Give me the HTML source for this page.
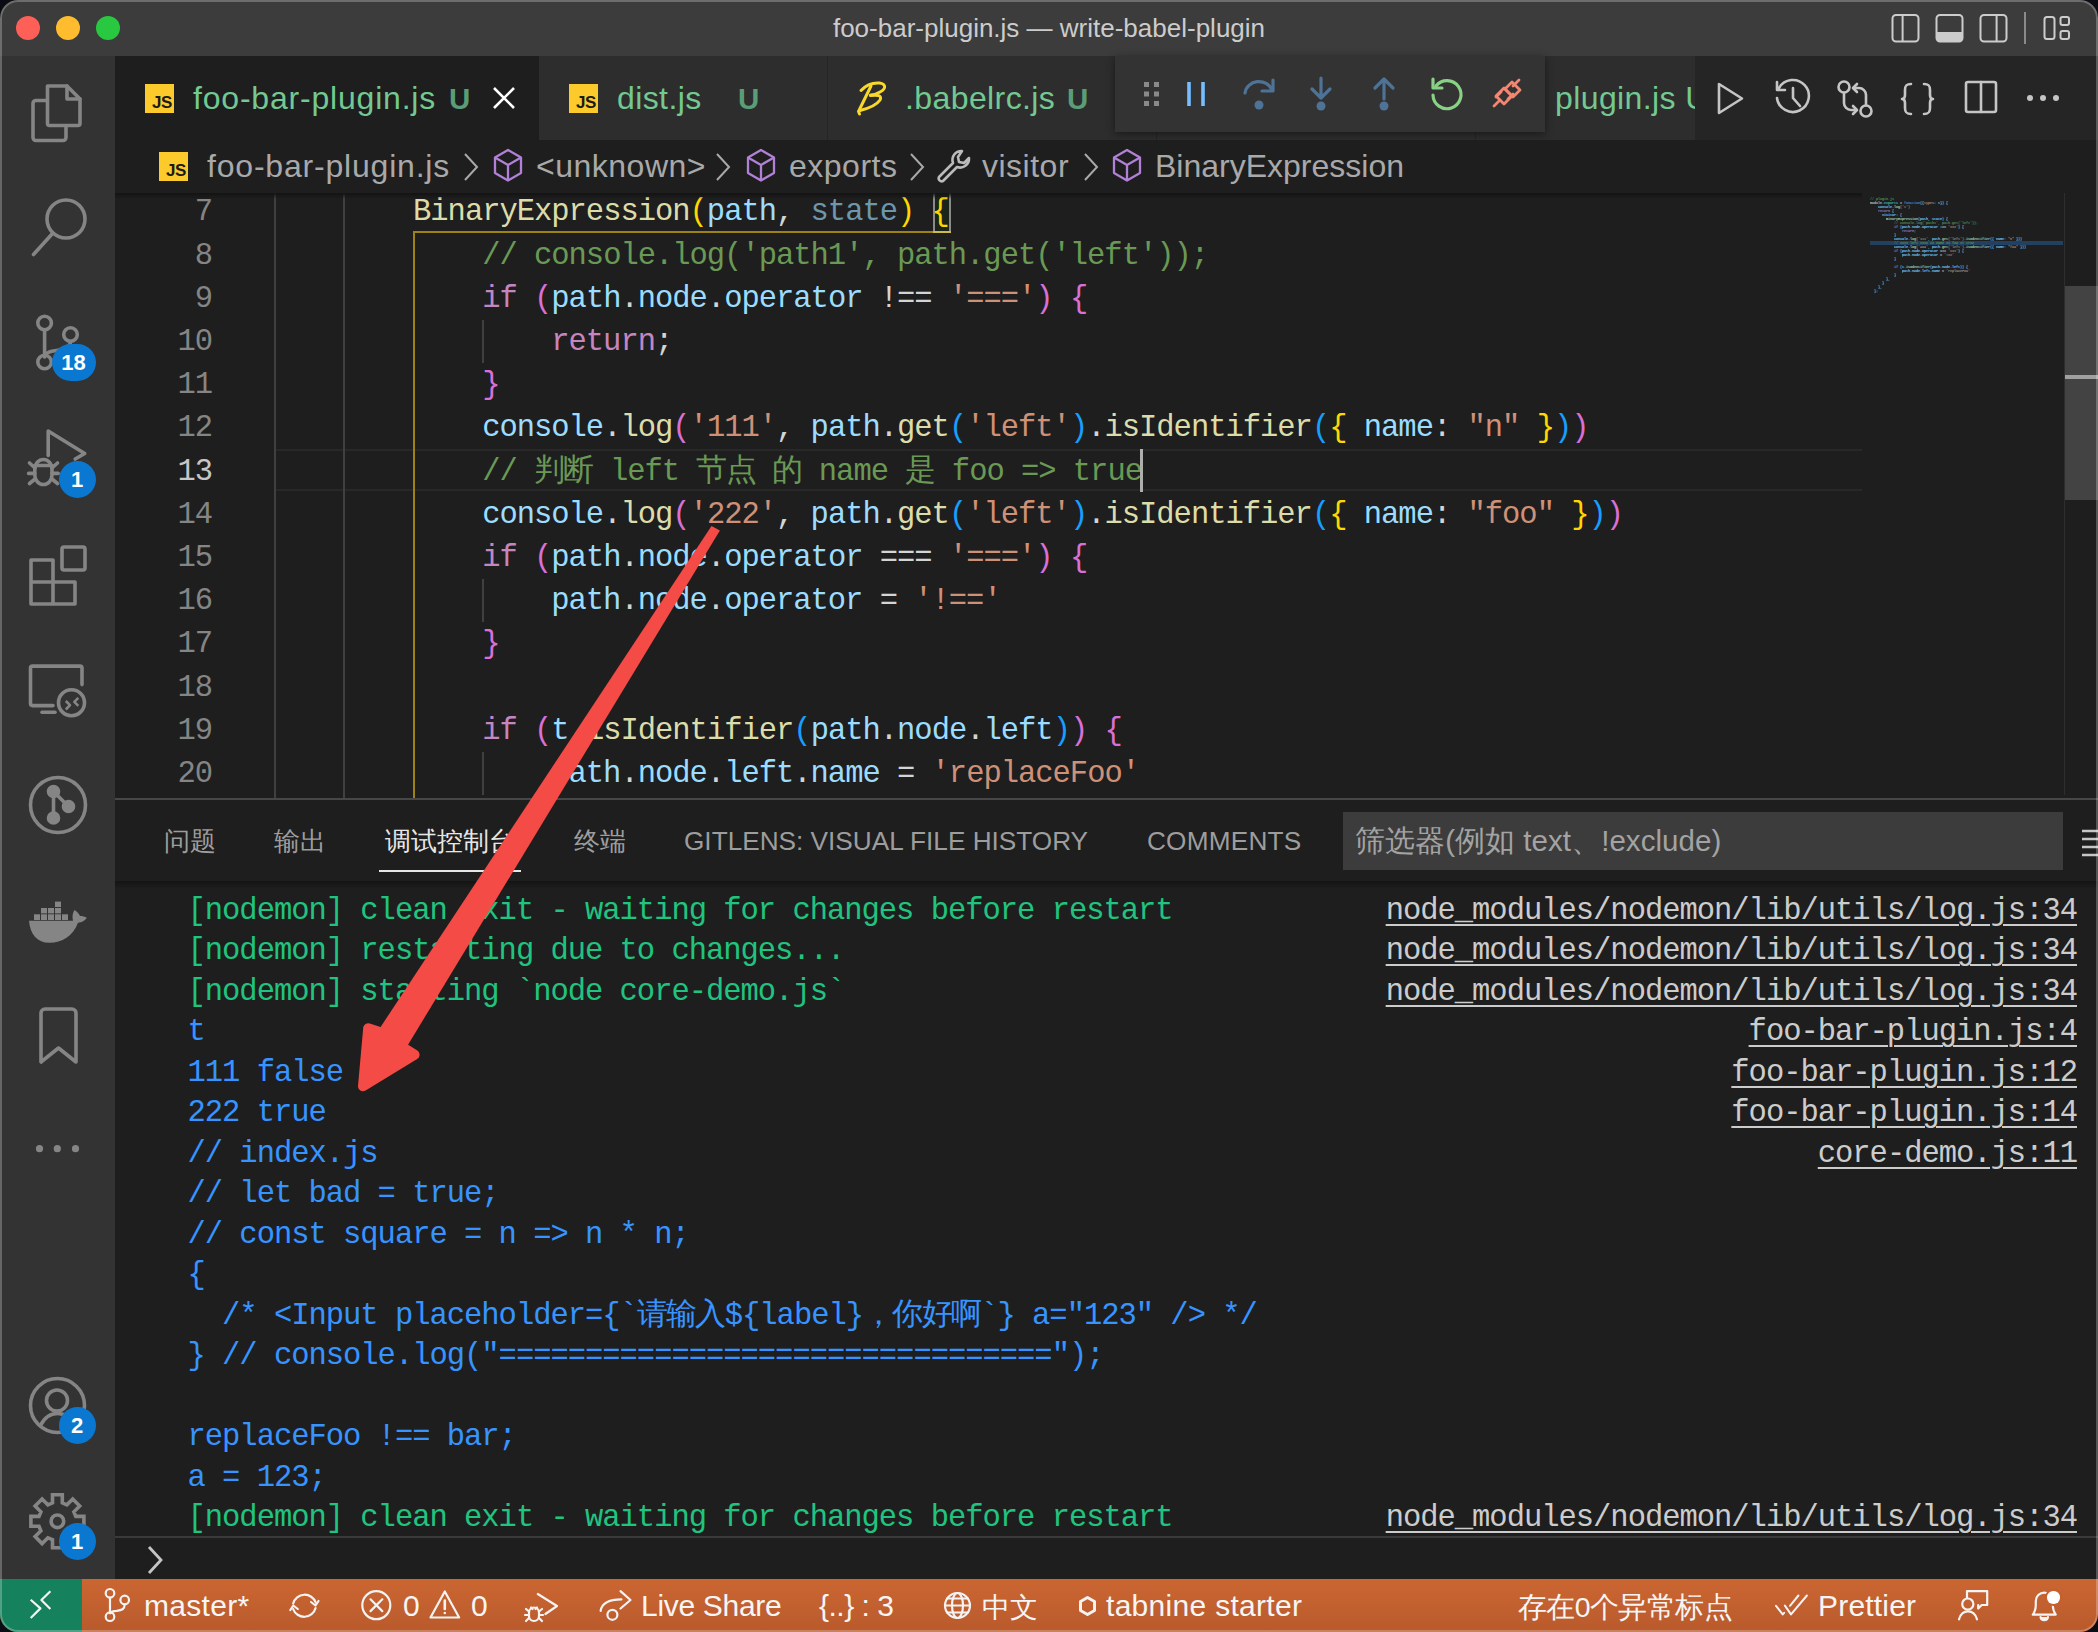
<!DOCTYPE html>
<html><head><meta charset="utf-8">
<style>
*{margin:0;padding:0;box-sizing:border-box}
html,body{width:2098px;height:1632px;overflow:hidden;background:#0b0c14}
body{position:relative;font-family:"Liberation Sans",sans-serif}
.a{position:absolute}
#win{position:absolute;left:0;top:0;width:2098px;height:1632px;border-radius:18px;overflow:hidden;background:#1e1e1e}
.m{position:absolute;font-family:"Liberation Mono",monospace;font-size:30.5px;letter-spacing:-1.020px;white-space:pre}
.ln{left:115px;width:97px;text-align:right;color:#858585;height:43.2px;line-height:43.2px}
.cl{height:43.2px;line-height:43.2px;color:#d4d4d4}
.co{height:40.5px;line-height:40.5px;color:#3794ff}
.lk{height:40.5px;line-height:40.5px;color:#cccccc;text-decoration:underline;text-underline-offset:5px;text-decoration-thickness:2px}
.f{color:#dcdcaa}.v{color:#9cdcfe}.k{color:#c586c0}.s{color:#ce9178}.c{color:#6a9955}
.b1{color:#ffd700}.b2{color:#da70d6}.b3{color:#179fff}.dim{color:#6c97ad}
.g{color:#20c47f}
.ui{font-family:"Liberation Sans",sans-serif;white-space:pre;position:absolute}
svg{position:absolute;overflow:visible}
</style></head><body>
<div id="win">

<div class="a" style="left:0;top:0;width:2098px;height:56px;background:#3c3c3c"></div>
<div class="a" style="left:16px;top:16px;width:24px;height:24px;border-radius:50%;background:#fe5f57"></div>
<div class="a" style="left:56px;top:16px;width:24px;height:24px;border-radius:50%;background:#febc2e"></div>
<div class="a" style="left:96px;top:16px;width:24px;height:24px;border-radius:50%;background:#28c840"></div>
<div class="ui" style="left:0;width:2098px;text-align:center;top:12px;font-size:26px;line-height:32px;color:#cccccc">foo-bar-plugin.js — write-babel-plugin</div>
<svg width="2098" height="56" style="left:0;top:0" fill="none" stroke="#cccccc" stroke-width="2">
<rect x="1892.5" y="15" width="26" height="26.5" rx="3.5"/><line x1="1902.6" y1="15" x2="1902.6" y2="41.5"/>
<rect x="1936.5" y="15" width="26" height="26.5" rx="3.5"/><path d="M1937 32h25v6.5a3 3 0 0 1-3 3h-19a3 3 0 0 1-3-3z" fill="#cccccc" stroke="none"/>
<rect x="1980.5" y="15" width="26" height="26.5" rx="3.5"/><line x1="1996.6" y1="15" x2="1996.6" y2="41.5"/>
<line x1="2025" y1="12" x2="2025" y2="44" stroke="#8a8a8a"/>
<rect x="2044.5" y="17" width="10" height="22" rx="2.5"/>
<rect x="2060.5" y="17" width="8.5" height="8" rx="2"/><rect x="2060.5" y="31" width="8.5" height="8" rx="2"/>
</svg>
<div class="a" style="left:0;top:56px;width:115px;height:1524px;background:#333333"></div>
<svg width="115" height="1580" style="left:0;top:0" fill="none" stroke="#858585" stroke-width="3.6" stroke-linejoin="round" stroke-linecap="round">
<!-- explorer -->
<rect x="33" y="100.5" width="33" height="40" rx="3"/>
<path d="M47.5 86h19.5l13 13v24.5a2 2 0 0 1-2 2h-28.5a2 2 0 0 1-2-2z" fill="#333333"/>
<path d="M67 86v13h13"/>
<!-- search -->
<circle cx="66" cy="219" r="19"/><line x1="52.5" y1="233.5" x2="33.5" y2="254.5"/>
<!-- scm -->
<circle cx="44.6" cy="323" r="6.8"/><circle cx="44.6" cy="362" r="6.8"/><circle cx="70.5" cy="334.5" r="6.8"/>
<line x1="44.6" y1="330" x2="44.6" y2="355"/><path d="M70.5 341.5C70.5 348 62 350 53 351C47.5 352 45 354 44.6 357"/>
<!-- run debug -->
<path d="M48.2 455.5V431l36.5 22.5l-9.5 5.5"/>
<path d="M34.8 469a8.6 9.5 0 0 1 17.2 0v6a8.6 9.5 0 0 1-17.2 0z"/><path d="M35 465.5h17M29.5 463l5.5 5M28.6 473.4h6.2M29.5 483.5l5.5-4.5M57.5 463l-5.5 5M52 473.4h6.2M57.5 483.5l-5.5-4.5"/>
<!-- extensions -->
<path d="M31 560h22v22h-22zM31 582v22h22v-22zM53 582h22v22h-22z"/>
<rect x="62" y="547" width="23" height="23" rx="2"/>
<!-- remote explorer -->
<path d="M53 705.6h-20.5a2 2 0 0 1-2-2v-35.5a2 2 0 0 1 2-2h47.5a2 2 0 0 1 2 2v16.5"/><path d="M42 712.3h13"/>
<circle cx="71.5" cy="702.7" r="13"/><path d="M65.8 701l4.2 4.2l-4.2 4.3M78.3 697.8l-4 4l4 4" stroke-width="2.6" stroke-linecap="butt"/>
<!-- gitlens -->
<circle cx="58" cy="805" r="27.5"/>
<path d="M53.5 791.5v25M53.5 791.5l15 15"/>
<circle cx="53.5" cy="791.5" r="5" fill="#858585"/><circle cx="53.5" cy="818" r="5" fill="#858585"/><circle cx="68.5" cy="806.5" r="5" fill="#858585"/>
<!-- bookmark -->
<path d="M41 1013a4 4 0 0 1 4-4h27a4 4 0 0 1 4 4v49l-17.5-14l-17.5 14z"/>
</svg>
<svg width="115" height="1580" style="left:0;top:0" fill="#858585" stroke="none">
<path d="M29 920.7H73C72 917 72.5 912.5 74.5 910C77 911.5 79 913.5 80 916C82.5 916 85 916.5 86.8 917.8C85 920.5 82 922.5 78 922.8C73 936 62 942.8 49.5 942.8C37 942.8 30 934 29 920.7Z"/>
<rect x="34" y="914.3" width="6" height="5.7"/><rect x="41" y="914.3" width="6" height="5.7"/><rect x="48" y="914.3" width="6" height="5.7"/><rect x="55" y="914.3" width="6" height="5.7"/><rect x="62" y="914.3" width="6" height="5.7"/>
<rect x="41" y="908" width="6" height="5.4"/><rect x="48" y="908" width="6" height="5.4"/><rect x="55" y="908" width="6" height="5.4"/>
<rect x="55" y="901.6" width="6" height="5.4"/>
<circle cx="39.5" cy="1148.7" r="3.6"/><circle cx="57.3" cy="1148.7" r="3.6"/><circle cx="75.5" cy="1148.7" r="3.6"/>
</svg>
<svg width="115" height="1580" style="left:0;top:0" fill="none" stroke="#858585" stroke-width="3.6" stroke-linejoin="round" stroke-linecap="round">
<!-- accounts -->
<circle cx="57.5" cy="1405.5" r="27"/><circle cx="57" cy="1400.5" r="10.5"/><path d="M40.5 1425.5c4-8 9.5-12 17-12s13 4 17 12"/>
<!-- gear -->
<circle cx="57.4" cy="1521.3" r="6.3"/>
<path d="M52.5 1502.9 L52.5 1494.8 L62.3 1494.8 L62.3 1502.9 L66.9 1504.8 L72.7 1499.0 L79.7 1506.0 L73.9 1511.8 L75.8 1516.4 L83.9 1516.4 L83.9 1526.2 L75.8 1526.2 L73.9 1530.8 L79.7 1536.6 L72.7 1543.6 L66.9 1537.8 L62.3 1539.7 L62.3 1547.8 L52.5 1547.8 L52.5 1539.7 L47.9 1537.8 L42.1 1543.6 L35.1 1536.6 L40.9 1530.8 L39.0 1526.2 L30.9 1526.2 L30.9 1516.4 L39.0 1516.4 L40.9 1511.8 L35.1 1506.0 L42.1 1499.0 L47.9 1504.8Z" stroke-linejoin="miter"/>
</svg>
<div class="a" style="left:51.5px;top:344.0px;width:44px;height:37px;border-radius:18.5px;background:#0a78d0;color:#fff;font-family:Liberation Sans,sans-serif;font-weight:bold;font-size:22px;line-height:37px;text-align:center">18</div>
<div class="a" style="left:58.5px;top:460.5px;width:37px;height:37px;border-radius:18.5px;background:#0a78d0;color:#fff;font-family:Liberation Sans,sans-serif;font-weight:bold;font-size:22px;line-height:37px;text-align:center">1</div>
<div class="a" style="left:58.5px;top:1406.5px;width:37px;height:37px;border-radius:18.5px;background:#0a78d0;color:#fff;font-family:Liberation Sans,sans-serif;font-weight:bold;font-size:22px;line-height:37px;text-align:center">2</div>
<div class="a" style="left:58.5px;top:1522.5px;width:37px;height:37px;border-radius:18.5px;background:#0a78d0;color:#fff;font-family:Liberation Sans,sans-serif;font-weight:bold;font-size:22px;line-height:37px;text-align:center">1</div>
<div class="a" style="left:115px;top:56px;width:1983px;height:84px;background:#252526"></div>
<div class="a" style="left:115px;top:56px;width:424px;height:84px;background:#1e1e1e"></div>
<div class="a" style="left:539px;top:56px;width:288px;height:84px;background:#2d2d2d"></div>
<div class="a" style="left:828px;top:56px;width:328px;height:84px;background:#2d2d2d"></div>
<div class="a" style="left:1157px;top:56px;width:318px;height:84px;background:#2d2d2d"></div>
<div class="a" style="left:1476px;top:56px;width:219px;height:84px;background:#2d2d2d"></div>
<div class="a" style="left:145px;top:84px;width:29px;height:29px;background:#fdca2c"></div>
<div class="ui" style="left:152px;top:93px;font-size:17px;line-height:20px;color:#1a1a1a;font-weight:bold;letter-spacing:-0.5px">JS</div>
<div class="ui" style="left:193px;top:79.5px;font-size:32px;line-height:36.8px;color:#73c991;letter-spacing:0.8px;">foo-bar-plugin.js</div>
<div class="ui" style="left:449px;top:81.8px;font-size:29.5px;line-height:33.9px;color:#5a9d77;letter-spacing:0px;font-weight:bold">U</div>
<svg width="30" height="30" style="left:489px;top:83px" stroke="#ffffff" stroke-width="2.6"><path d="M5 5L25 25M25 5L5 25"/></svg>
<div class="a" style="left:569px;top:84px;width:29px;height:29px;background:#fdca2c"></div>
<div class="ui" style="left:576px;top:93px;font-size:17px;line-height:20px;color:#1a1a1a;font-weight:bold;letter-spacing:-0.5px">JS</div>
<div class="ui" style="left:617px;top:79.5px;font-size:32px;line-height:36.8px;color:#73c991;letter-spacing:0.4px;">dist.js</div>
<div class="ui" style="left:738px;top:81.8px;font-size:29.5px;line-height:33.9px;color:#5a9d77;letter-spacing:0px;font-weight:bold">U</div>
<svg width="2098" height="140" style="left:0;top:0" fill="none" stroke="#f7d82b" stroke-width="3" stroke-linecap="round" stroke-linejoin="round"><path d="M861 90.5C866 85 873 82.5 879.5 83C886 84 886.5 88.5 880 92C876 94.5 872.5 95 870.5 95"/><path d="M871 86L858.5 111.5L859.5 114"/><path d="M870.5 95.5C877 94.5 882.5 95.5 880 100C877 104.5 868 108.5 860 110.5"/></svg>
<div class="ui" style="left:905px;top:79.5px;font-size:32px;line-height:36.8px;color:#73c991;letter-spacing:0.4px;">.babelrc.js</div>
<div class="ui" style="left:1067px;top:81.8px;font-size:29.5px;line-height:33.9px;color:#5a9d77;letter-spacing:0px;font-weight:bold">U</div>
<div class="a" style="left:827px;top:56px;width:1px;height:84px;background:#252526"></div>
<div class="a" style="left:1156px;top:56px;width:1px;height:84px;background:#252526"></div>
<div class="a" style="left:1475px;top:56px;width:1px;height:84px;background:#252526"></div>
<div class="a" style="left:1545px;top:56px;width:150px;height:84px;overflow:hidden">
<div class="ui" style="left:10px;top:23.5px;font-size:32px;line-height:36.8px;color:#73c991;letter-spacing:0.4px">plugin.js U</div>
</div>
<div class="a" style="left:1115px;top:56px;width:430px;height:76px;background:#333333;box-shadow:0 2px 8px rgba(0,0,0,0.45)"></div>
<svg width="2098" height="140" style="left:0;top:0" fill="none" stroke-width="3.2" stroke-linecap="round" stroke-linejoin="round">
<g fill="#8a8a8a" stroke="none"><rect x="1144" y="82" width="5" height="5"/><rect x="1154" y="82" width="5" height="5"/><rect x="1144" y="91.5" width="5" height="5"/><rect x="1154" y="91.5" width="5" height="5"/><rect x="1144" y="101" width="5" height="5"/><rect x="1154" y="101" width="5" height="5"/></g>
<g stroke="#75beff" stroke-linecap="butt"><line x1="1189" y1="82" x2="1189" y2="106" stroke-width="3.6"/><line x1="1203" y1="82" x2="1203" y2="106" stroke-width="3.6"/></g>
<g stroke="#4e7397"><path d="M1245 93a14 13 0 0 1 27-3"/><path d="M1273 80v11h-11"/></g><circle cx="1259" cy="105" r="4.5" fill="#4e7397"/>
<g stroke="#4e7397"><path d="M1321 78v20M1312 89l9 9l9-9"/></g><circle cx="1321" cy="106" r="4.5" fill="#4e7397"/>
<g stroke="#4e7397"><path d="M1384 99v-20M1375 88l9-9l9 9"/></g><circle cx="1384" cy="106" r="4.5" fill="#4e7397"/>
<g stroke="#89d185"><path d="M1436 86a14 14 0 1 1-3 9"/><path d="M1433 79v9h9"/></g>
<g stroke="#f48771" stroke-width="2.8"><path d="M1494 106l6-6M1519 80l-6 6"/><path d="M1500 100l-4-4l8-8l8 8l-8 8z" transform="rotate(0)"/><path d="M1505 89l7-7l8 8l-7 7z"/><path d="M1501 92l-5 5M1508 99l5-5"/></g>
</svg>
<svg width="2098" height="140" style="left:0;top:0" fill="none" stroke="#c5c5c5" stroke-width="2.6" stroke-linejoin="round" stroke-linecap="round">
<path d="M1719 84v29l23-14.5z"/>
<path d="M1779 88a16 16 0 1 1-2 10"/><path d="M1777 82v8h8"/><path d="M1793 88v10l7 8"/>
<circle cx="1844" cy="87" r="5.5"/><path d="M1844 93v10a7 7 0 0 0 7 7h5"/><path d="M1853 106l4 4l-4 4"/>
<circle cx="1866" cy="111" r="5.5"/><path d="M1866 105v-10a7 7 0 0 0-7-7h-5"/><path d="M1857 84l-4 4l4 4"/>
<path d="M1911 84c-5 0-6 2-6 6v5c0 3-1 4-3 4c2 0 3 1 3 4v5c0 4 1 6 6 6"/><path d="M1924 84c5 0 6 2 6 6v5c0 3 1 4 3 4c-2 0-3 1-3 4v5c0 4-1 6-6 6"/>
<rect x="1966" y="82" width="30" height="30" rx="2"/><line x1="1981" y1="82" x2="1981" y2="112"/>
<g fill="#c5c5c5" stroke="none"><circle cx="2030" cy="98" r="3"/><circle cx="2043" cy="98" r="3"/><circle cx="2056" cy="98" r="3"/></g>
</svg>
<div class="a" style="left:115px;top:140px;width:1983px;height:53px;background:#1e1e1e"></div>
<div class="a" style="left:159px;top:152px;width:29px;height:29px;background:#fdca2c"></div>
<div class="ui" style="left:166px;top:161px;font-size:17px;line-height:20px;color:#1a1a1a;font-weight:bold;letter-spacing:-0.5px">JS</div>
<div class="ui" style="left:207px;top:147.5px;font-size:32px;line-height:36.8px;color:#a9a9a9;letter-spacing:0.8px;">foo-bar-plugin.js</div>
<svg width="20" height="30" style="left:462px;top:152px" fill="none" stroke="#a9a9a9" stroke-width="2"><path d="M3 2l12 13l-12 13"/></svg>
<svg width="32" height="36" style="left:493px;top:148px" fill="none" stroke="#b180d7" stroke-width="2.3" stroke-linejoin="round"><path d="M15 2L28 9.5V25L15 32.5L2 25V9.5z M2 9.5L15 17L28 9.5 M15 17V32.5"/></svg>
<div class="ui" style="left:536px;top:147.5px;font-size:32px;line-height:36.8px;color:#a9a9a9;letter-spacing:0.5px;">&lt;unknown&gt;</div>
<svg width="20" height="30" style="left:714px;top:152px" fill="none" stroke="#a9a9a9" stroke-width="2"><path d="M3 2l12 13l-12 13"/></svg>
<svg width="32" height="36" style="left:746px;top:148px" fill="none" stroke="#b180d7" stroke-width="2.3" stroke-linejoin="round"><path d="M15 2L28 9.5V25L15 32.5L2 25V9.5z M2 9.5L15 17L28 9.5 M15 17V32.5"/></svg>
<div class="ui" style="left:789px;top:147.5px;font-size:32px;line-height:36.8px;color:#a9a9a9;letter-spacing:0.5px;">exports</div>
<svg width="20" height="30" style="left:908px;top:152px" fill="none" stroke="#a9a9a9" stroke-width="2"><path d="M3 2l12 13l-12 13"/></svg>
<svg width="40" height="40" style="left:936px;top:148px" fill="none" stroke="#bbbbbb" stroke-width="2.6" stroke-linejoin="round" stroke-linecap="round"><path d="M26 3a9 9 0 0 0-9 12L3 29a3 3 0 0 0 4 4l14-14a9 9 0 0 0 12-9l-5 5l-5-1l-1-5z"/></svg>
<div class="ui" style="left:982px;top:147.5px;font-size:32px;line-height:36.8px;color:#a9a9a9;letter-spacing:0.5px;">visitor</div>
<svg width="20" height="30" style="left:1082px;top:152px" fill="none" stroke="#a9a9a9" stroke-width="2"><path d="M3 2l12 13l-12 13"/></svg>
<svg width="32" height="36" style="left:1112px;top:148px" fill="none" stroke="#b180d7" stroke-width="2.3" stroke-linejoin="round"><path d="M15 2L28 9.5V25L15 32.5L2 25V9.5z M2 9.5L15 17L28 9.5 M15 17V32.5"/></svg>
<div class="ui" style="left:1155px;top:147.5px;font-size:32px;line-height:36.8px;color:#a9a9a9;letter-spacing:0px;">BinaryExpression</div>
<div class="a" style="left:115px;top:193px;width:1983px;height:605px;background:#1e1e1e"></div>
<div class="a" style="left:275px;top:449px;width:1587px;height:42px;border-top:2px solid #282828;border-bottom:2px solid #282828"></div>
<div class="a" style="left:274px;top:193px;width:2px;height:605px;background:#404040"></div>
<div class="a" style="left:343px;top:193px;width:2px;height:605px;background:#404040"></div>
<div class="a" style="left:413px;top:231px;width:2px;height:567px;background:#9c8314"></div>
<div class="a" style="left:413px;top:231px;width:537px;height:2px;background:#9c8314"></div>
<div class="a" style="left:482px;top:320.0px;width:2px;height:43.2px;background:#404040"></div>
<div class="a" style="left:482px;top:579.2px;width:2px;height:43.2px;background:#404040"></div>
<div class="a" style="left:482px;top:752.0px;width:2px;height:43.2px;background:#404040"></div>
<div class="a" style="left:933px;top:193px;width:18px;height:40px;border-left:2px solid #8a8a8a;border-right:2px solid #8a8a8a;background:#1a2419"></div>
<div class="a" style="left:933px;top:231px;width:18px;height:2px;background:#d2b846"></div>
<div class="a" style="left:115px;top:193px;width:1747px;height:605px;overflow:hidden">
<div class="m ln" style="left:0;top:-1.6px;color:#858585">7</div>
<div class="m cl" style="left:298.04px;top:-1.6px"><span class="f">BinaryExpression</span><span class="b1">(</span><span class="v">path</span>, <span class="dim">state</span><span class="b1">)</span> <span class="b1">{</span></div>
<div class="m ln" style="left:0;top:41.6px;color:#858585">8</div>
<div class="m cl" style="left:367.16px;top:41.6px"><span class="c">// console.log(&#x27;path1&#x27;, path.get(&#x27;left&#x27;));</span></div>
<div class="m ln" style="left:0;top:84.8px;color:#858585">9</div>
<div class="m cl" style="left:367.16px;top:84.8px"><span class="k">if</span> <span class="b2">(</span><span class="v">path</span>.<span class="v">node</span>.<span class="v">operator</span> !== <span class="s">&#x27;===&#x27;</span><span class="b2">)</span> <span class="b2">{</span></div>
<div class="m ln" style="left:0;top:128.0px;color:#858585">10</div>
<div class="m cl" style="left:436.28px;top:128.0px"><span class="k">return</span>;</div>
<div class="m ln" style="left:0;top:171.2px;color:#858585">11</div>
<div class="m cl" style="left:367.16px;top:171.2px"><span class="b2">}</span></div>
<div class="m ln" style="left:0;top:214.4px;color:#858585">12</div>
<div class="m cl" style="left:367.16px;top:214.4px"><span class="v">console</span>.<span class="f">log</span><span class="b2">(</span><span class="s">&#x27;111&#x27;</span>, <span class="v">path</span>.<span class="f">get</span><span class="b3">(</span><span class="s">&#x27;left&#x27;</span><span class="b3">)</span>.<span class="f">isIdentifier</span><span class="b3">(</span><span class="b1">{</span> <span class="v">name</span>: <span class="s">&quot;n&quot;</span> <span class="b1">}</span><span class="b3">)</span><span class="b2">)</span></div>
<div class="m ln" style="left:0;top:257.6px;color:#c6c6c6">13</div>
<div class="m cl" style="left:367.16px;top:257.6px"><span class="c">// <span style="letter-spacing:-1.7px">判断</span> left <span style="letter-spacing:-1.7px">节点</span> <span style="letter-spacing:-1.7px">的</span> name <span style="letter-spacing:-1.7px">是</span> foo =&gt; true</span></div>
<div class="m ln" style="left:0;top:300.8px;color:#858585">14</div>
<div class="m cl" style="left:367.16px;top:300.8px"><span class="v">console</span>.<span class="f">log</span><span class="b2">(</span><span class="s">&#x27;222&#x27;</span>, <span class="v">path</span>.<span class="f">get</span><span class="b3">(</span><span class="s">&#x27;left&#x27;</span><span class="b3">)</span>.<span class="f">isIdentifier</span><span class="b3">(</span><span class="b1">{</span> <span class="v">name</span>: <span class="s">&quot;foo&quot;</span> <span class="b1">}</span><span class="b3">)</span><span class="b2">)</span></div>
<div class="m ln" style="left:0;top:344.0px;color:#858585">15</div>
<div class="m cl" style="left:367.16px;top:344.0px"><span class="k">if</span> <span class="b2">(</span><span class="v">path</span>.<span class="v">node</span>.<span class="v">operator</span> === <span class="s">&#x27;===&#x27;</span><span class="b2">)</span> <span class="b2">{</span></div>
<div class="m ln" style="left:0;top:387.2px;color:#858585">16</div>
<div class="m cl" style="left:436.28px;top:387.2px"><span class="v">path</span>.<span class="v">node</span>.<span class="v">operator</span> = <span class="s">&#x27;!==&#x27;</span></div>
<div class="m ln" style="left:0;top:430.4px;color:#858585">17</div>
<div class="m cl" style="left:367.16px;top:430.4px"><span class="b2">}</span></div>
<div class="m ln" style="left:0;top:473.6px;color:#858585">18</div>
<div class="m cl" style="left:367.16px;top:473.6px"></div>
<div class="m ln" style="left:0;top:516.8px;color:#858585">19</div>
<div class="m cl" style="left:367.16px;top:516.8px"><span class="k">if</span> <span class="b2">(</span><span class="v">t</span>.<span class="f">isIdentifier</span><span class="b3">(</span><span class="v">path</span>.<span class="v">node</span>.<span class="v">left</span><span class="b3">)</span><span class="b2">)</span> <span class="b2">{</span></div>
<div class="m ln" style="left:0;top:560.0px;color:#858585">20</div>
<div class="m cl" style="left:436.28px;top:560.0px"><span class="v">path</span>.<span class="v">node</span>.<span class="v">left</span>.<span class="v">name</span> = <span class="s">&#x27;replaceFoo&#x27;</span></div>
</div>
<div class="a" style="left:1140px;top:449px;width:3px;height:43px;background:#aeafad"></div>
<div class="a" style="left:115px;top:798px;width:1983px;height:2px;background:#474747"></div>
<div class="a" style="left:115px;top:800px;width:1983px;height:779px;background:#1e1e1e"></div>
<div class="ui" style="left:164px;top:826.1px;font-size:26.4px;line-height:30.3px;color:#9d9d9d;letter-spacing:0px">问题</div>
<div class="ui" style="left:274px;top:826.1px;font-size:26.4px;line-height:30.3px;color:#9d9d9d;letter-spacing:0px">输出</div>
<div class="ui" style="left:385px;top:826.1px;font-size:26.4px;line-height:30.3px;color:#e7e7e7;letter-spacing:0px">调试控制台</div>
<div class="a" style="left:379px;top:870px;width:142px;height:2px;background:#e7e7e7"></div>
<div class="ui" style="left:574px;top:826.1px;font-size:26.4px;line-height:30.3px;color:#9d9d9d;letter-spacing:0px">终端</div>
<div class="ui" style="left:684px;top:826.3px;font-size:26.2px;line-height:30.1px;color:#9d9d9d;letter-spacing:0px">GITLENS: VISUAL FILE HISTORY</div>
<div class="ui" style="left:1147px;top:826.3px;font-size:26.2px;line-height:30.1px;color:#9d9d9d;letter-spacing:0.2px">COMMENTS</div>
<div class="a" style="left:1343px;top:812px;width:720px;height:58px;background:#3c3c3c"></div>
<div class="ui" style="left:1355px;top:824.3px;font-size:29.5px;line-height:33.9px;color:#a3a3a3;letter-spacing:0.05px">筛选器(例如 text、!exclude)</div>
<svg width="30" height="30" style="left:2080px;top:827px" stroke="#c5c5c5" stroke-width="2.6"><path d="M2 4h24M2 12h24M2 20h24M2 28h24"/></svg>
<div class="a" style="left:115px;top:881px;width:1983px;height:8px;background:linear-gradient(#141414,rgba(30,30,30,0))"></div>
<div class="m co g" style="left:187.5px;top:890.9px">[nodemon] clean exit - waiting for changes before restart</div>
<div class="m lk" style="right:21px;top:890.9px">node_modules/nodemon/lib/utils/log.js:34</div>
<div class="m co g" style="left:187.5px;top:931.4px">[nodemon] restarting due to changes...</div>
<div class="m lk" style="right:21px;top:931.4px">node_modules/nodemon/lib/utils/log.js:34</div>
<div class="m co g" style="left:187.5px;top:971.8px">[nodemon] starting `node core-demo.js`</div>
<div class="m lk" style="right:21px;top:971.8px">node_modules/nodemon/lib/utils/log.js:34</div>
<div class="m co" style="left:187.5px;top:1012.3px">t</div>
<div class="m lk" style="right:21px;top:1012.3px">foo-bar-plugin.js:4</div>
<div class="m co" style="left:187.5px;top:1052.8px">111 false</div>
<div class="m lk" style="right:21px;top:1052.8px">foo-bar-plugin.js:12</div>
<div class="m co" style="left:187.5px;top:1093.2px">222 true</div>
<div class="m lk" style="right:21px;top:1093.2px">foo-bar-plugin.js:14</div>
<div class="m co" style="left:187.5px;top:1133.7px">// index.js</div>
<div class="m lk" style="right:21px;top:1133.7px">core-demo.js:11</div>
<div class="m co" style="left:187.5px;top:1174.2px">// let bad = true;</div>
<div class="m co" style="left:187.5px;top:1214.7px">// const square = n =&gt; n * n;</div>
<div class="m co" style="left:187.5px;top:1255.1px">{</div>
<div class="m co" style="left:187.5px;top:1295.6px">  /* &lt;Input placeholder={`<span style="letter-spacing:-1.7px">请输入</span>${label}<span style="letter-spacing:-1.7px">，你好啊</span>`} a=&quot;123&quot; /&gt; */</div>
<div class="m co" style="left:187.5px;top:1336.1px">} // console.log(&quot;================================&quot;);</div>
<div class="m co" style="left:187.5px;top:1376.5px"></div>
<div class="m co" style="left:187.5px;top:1417.0px">replaceFoo !== bar;</div>
<div class="m co" style="left:187.5px;top:1457.5px">a = 123;</div>
<div class="m co g" style="left:187.5px;top:1497.9px">[nodemon] clean exit - waiting for changes before restart</div>
<div class="m lk" style="right:21px;top:1497.9px">node_modules/nodemon/lib/utils/log.js:34</div>
<div class="a" style="left:115px;top:1536px;width:1983px;height:2px;background:#3a3a3a"></div>
<svg width="20" height="30" style="left:146px;top:1545px" fill="none" stroke="#c5c5c5" stroke-width="2.8"><path d="M3 2l12 13l-12 13"/></svg>
<div class="a" style="left:1870px;top:241px;width:193px;height:4px;background:#22405f"></div>
<div class="a" style="left:1870px;top:196.7px;width:193px;height:100px;overflow:hidden">
<div class="a" style="left:0;top:0;width:1158px;height:600px;transform:scale(0.16667);transform-origin:0 0">
<div class="a" style="left:0px;top:0px;font-family:Liberation Mono,monospace;font-size:20px;line-height:24px;height:24px;white-space:pre;font-weight:bold;opacity:0.9"><span style="color:#6a9955">// plugin.js</span></div>
<div class="a" style="left:0px;top:24px;font-family:Liberation Mono,monospace;font-size:20px;line-height:24px;height:24px;white-space:pre;font-weight:bold;opacity:0.9"><span style="color:#d4d4d4">module.</span><span style="color:#4ec9b0">exports</span><span style="color:#d4d4d4"> = </span><span style="color:#569cd6">function</span><span style="color:#d4d4d4">({</span><span style="color:#ce9178">types</span><span style="color:#d4d4d4">: t}) {</span></div>
<div class="a" style="left:48px;top:48px;font-family:Liberation Mono,monospace;font-size:20px;line-height:24px;height:24px;white-space:pre;font-weight:bold;opacity:0.9"><span style="color:#9cdcfe">console.</span><span style="color:#dcdcaa">log</span><span style="color:#ce9178">(&#x27;t&#x27;)</span></div>
<div class="a" style="left:48px;top:72px;font-family:Liberation Mono,monospace;font-size:20px;line-height:24px;height:24px;white-space:pre;font-weight:bold;opacity:0.9"><span style="color:#c586c0">return</span><span style="color:#d4d4d4"> {</span></div>
<div class="a" style="left:72px;top:96px;font-family:Liberation Mono,monospace;font-size:20px;line-height:24px;height:24px;white-space:pre;font-weight:bold;opacity:0.9"><span style="color:#9cdcfe">visitor</span><span style="color:#d4d4d4">: {</span></div>
<div class="a" style="left:96px;top:120px;font-family:Liberation Mono,monospace;font-size:20px;line-height:24px;height:24px;white-space:pre;font-weight:bold;opacity:0.9"><span style="color:#dcdcaa">BinaryExpression</span><span style="color:#9cdcfe">(path, state)</span><span style="color:#d4d4d4"> {</span></div>
<div class="a" style="left:144px;top:144px;font-family:Liberation Mono,monospace;font-size:20px;line-height:24px;height:24px;white-space:pre;font-weight:bold;opacity:0.9"><span style="color:#6a9955">// console.log(&#x27;path1&#x27;, path.get(&#x27;left&#x27;));</span></div>
<div class="a" style="left:144px;top:168px;font-family:Liberation Mono,monospace;font-size:20px;line-height:24px;height:24px;white-space:pre;font-weight:bold;opacity:0.9"><span style="color:#c586c0">if</span><span style="color:#9cdcfe"> (path.node.operator</span><span style="color:#d4d4d4"> !== </span><span style="color:#ce9178">&#x27;===&#x27;</span><span style="color:#d4d4d4">) {</span></div>
<div class="a" style="left:192px;top:192px;font-family:Liberation Mono,monospace;font-size:20px;line-height:24px;height:24px;white-space:pre;font-weight:bold;opacity:0.9"><span style="color:#c586c0">return</span><span style="color:#d4d4d4">;</span></div>
<div class="a" style="left:144px;top:216px;font-family:Liberation Mono,monospace;font-size:20px;line-height:24px;height:24px;white-space:pre;font-weight:bold;opacity:0.9"><span style="color:#d4d4d4">}</span></div>
<div class="a" style="left:144px;top:240px;font-family:Liberation Mono,monospace;font-size:20px;line-height:24px;height:24px;white-space:pre;font-weight:bold;opacity:0.9"><span style="color:#9cdcfe">console.</span><span style="color:#dcdcaa">log</span><span style="color:#ce9178">(&#x27;111&#x27;</span><span style="color:#9cdcfe">, path.</span><span style="color:#dcdcaa">get</span><span style="color:#ce9178">(&#x27;left&#x27;)</span><span style="color:#dcdcaa">.isIdentifier</span><span style="color:#9cdcfe">({ name: </span><span style="color:#ce9178">&quot;n&quot;</span><span style="color:#d4d4d4"> }))</span></div>
<div class="a" style="left:144px;top:264px;font-family:Liberation Mono,monospace;font-size:20px;line-height:24px;height:24px;white-space:pre;font-weight:bold;opacity:0.9"><span style="color:#6a9955">// xxxx left xxxx xx name xx foo =&gt; true</span></div>
<div class="a" style="left:144px;top:288px;font-family:Liberation Mono,monospace;font-size:20px;line-height:24px;height:24px;white-space:pre;font-weight:bold;opacity:0.9"><span style="color:#9cdcfe">console.</span><span style="color:#dcdcaa">log</span><span style="color:#ce9178">(&#x27;222&#x27;</span><span style="color:#9cdcfe">, path.</span><span style="color:#dcdcaa">get</span><span style="color:#ce9178">(&#x27;left&#x27;)</span><span style="color:#dcdcaa">.isIdentifier</span><span style="color:#9cdcfe">({ name: </span><span style="color:#ce9178">&quot;foo&quot;</span><span style="color:#d4d4d4"> }))</span></div>
<div class="a" style="left:144px;top:312px;font-family:Liberation Mono,monospace;font-size:20px;line-height:24px;height:24px;white-space:pre;font-weight:bold;opacity:0.9"><span style="color:#c586c0">if</span><span style="color:#9cdcfe"> (path.node.operator</span><span style="color:#d4d4d4"> === </span><span style="color:#ce9178">&#x27;===&#x27;</span><span style="color:#d4d4d4">) {</span></div>
<div class="a" style="left:192px;top:336px;font-family:Liberation Mono,monospace;font-size:20px;line-height:24px;height:24px;white-space:pre;font-weight:bold;opacity:0.9"><span style="color:#9cdcfe">path.node.operator</span><span style="color:#d4d4d4"> = </span><span style="color:#ce9178">&#x27;!==&#x27;</span></div>
<div class="a" style="left:144px;top:360px;font-family:Liberation Mono,monospace;font-size:20px;line-height:24px;height:24px;white-space:pre;font-weight:bold;opacity:0.9"><span style="color:#d4d4d4">}</span></div>
<div class="a" style="left:144px;top:384px;font-family:Liberation Mono,monospace;font-size:20px;line-height:24px;height:24px;white-space:pre;font-weight:bold;opacity:0.9"></div>
<div class="a" style="left:144px;top:408px;font-family:Liberation Mono,monospace;font-size:20px;line-height:24px;height:24px;white-space:pre;font-weight:bold;opacity:0.9"><span style="color:#c586c0">if</span><span style="color:#9cdcfe"> (t.</span><span style="color:#dcdcaa">isIdentifier</span><span style="color:#9cdcfe">(path.node.left)</span><span style="color:#d4d4d4">) {</span></div>
<div class="a" style="left:192px;top:432px;font-family:Liberation Mono,monospace;font-size:20px;line-height:24px;height:24px;white-space:pre;font-weight:bold;opacity:0.9"><span style="color:#9cdcfe">path.node.left.name</span><span style="color:#d4d4d4"> = </span><span style="color:#ce9178">&#x27;replaceFoo&#x27;</span></div>
<div class="a" style="left:144px;top:456px;font-family:Liberation Mono,monospace;font-size:20px;line-height:24px;height:24px;white-space:pre;font-weight:bold;opacity:0.9"><span style="color:#d4d4d4">}</span></div>
<div class="a" style="left:96px;top:480px;font-family:Liberation Mono,monospace;font-size:20px;line-height:24px;height:24px;white-space:pre;font-weight:bold;opacity:0.9"><span style="color:#d4d4d4">},</span></div>
<div class="a" style="left:72px;top:504px;font-family:Liberation Mono,monospace;font-size:20px;line-height:24px;height:24px;white-space:pre;font-weight:bold;opacity:0.9"><span style="color:#d4d4d4">}</span></div>
<div class="a" style="left:48px;top:528px;font-family:Liberation Mono,monospace;font-size:20px;line-height:24px;height:24px;white-space:pre;font-weight:bold;opacity:0.9"><span style="color:#d4d4d4">},</span></div>
<div class="a" style="left:24px;top:552px;font-family:Liberation Mono,monospace;font-size:20px;line-height:24px;height:24px;white-space:pre;font-weight:bold;opacity:0.9"><span style="color:#d4d4d4">};</span></div>
</div>
</div>
<div class="a" style="left:2064px;top:193px;width:1px;height:602px;background:#2e2e2e"></div>
<div class="a" style="left:2065px;top:286px;width:33px;height:214px;background:#434343"></div>
<div class="a" style="left:2065px;top:375px;width:33px;height:4px;background:#a0a0a0"></div>
<div class="a" style="left:115px;top:193px;width:1747px;height:6px;background:linear-gradient(#131313,rgba(30,30,30,0))"></div>
<svg width="2098" height="1632" style="left:0;top:0"><polygon points="711.5,525.9 719.9,530.5 400,1058 372,1040" fill="#f44b46"/><polygon points="379.6,1032.1 368.2,1028.2 363.0,1086.3 414.6,1054.8 406.3,1049.5" fill="#f44b46" stroke="#f44b46" stroke-width="10" stroke-linejoin="round"/></svg>
<div class="a" style="left:0;top:1579px;width:2098px;height:53px;background:linear-gradient(#cb6632,#b95a2c)"></div>
<div class="a" style="left:0;top:1579px;width:82px;height:53px;background:#16825d"></div>
<div class="ui" style="left:144px;top:1589.3px;font-size:30px;line-height:34.5px;color:#f5f5f5;letter-spacing:0.3px">master*</div>
<div class="ui" style="left:403px;top:1589.3px;font-size:30px;line-height:34.5px;color:#f5f5f5;letter-spacing:0px">0</div>
<div class="ui" style="left:471px;top:1589.3px;font-size:30px;line-height:34.5px;color:#f5f5f5;letter-spacing:0px">0</div>
<div class="ui" style="left:641px;top:1589.3px;font-size:30px;line-height:34.5px;color:#f5f5f5;letter-spacing:-0.3px">Live Share</div>
<div class="ui" style="left:819px;top:1589.3px;font-size:30px;line-height:34.5px;color:#f5f5f5;letter-spacing:-0.5px">{..} : 3</div>
<div class="ui" style="left:982px;top:1591.6px;font-size:27.5px;line-height:31.6px;color:#f5f5f5;letter-spacing:0px">中文</div>
<div class="ui" style="left:1106px;top:1589.3px;font-size:30px;line-height:34.5px;color:#f5f5f5;letter-spacing:0.3px">tabnine starter</div>
<div class="ui" style="left:1518px;top:1590.7px;font-size:28.5px;line-height:32.7px;color:#f5f5f5;letter-spacing:-0.6px">存在0个异常标点</div>
<div class="ui" style="left:1818px;top:1589.3px;font-size:30px;line-height:34.5px;color:#f5f5f5;letter-spacing:0.2px">Prettier</div>
<svg width="2098" height="1632" style="left:0;top:0" fill="none" stroke="#f3f3f3" stroke-width="2.2" stroke-linecap="round" stroke-linejoin="round">
<path d="M30.7 1599.7l9.7 8.7l-9.7 9.6M50.4 1591.3l-9 8.7l9 9" stroke-linecap="butt"/>
<circle cx="110" cy="1593.3" r="4.3"/><circle cx="110" cy="1616.7" r="4.3"/><circle cx="124.7" cy="1600" r="4.3"/><path d="M110 1597.6v14.8M124.7 1604.3c0 5-3 6-8 6.5c-4 .3-6 1-6.7 2.5"/>
<path d="M293.2 1603.5a11.8 11.8 0 0 1 22.5-1"/><path d="M315.6 1608a11.8 11.8 0 0 1-22.5 1"/><path d="M311 1602l4.5 3.5l3-4.5M297.8 1609l-4.5-3.5l-3 4.5"/>
<circle cx="376.3" cy="1605.2" r="14"/><path d="M370.5 1599.3l11.8 11.8M382.3 1599.3l-11.8 11.8"/>
<path d="M444.8 1591.5l14.3 26h-28.6z"/><path d="M444.8 1600.5v8.5" stroke-width="2.6"/><circle cx="444.8" cy="1613" r="1.3" fill="#f3f3f3" stroke="none"/>
<path d="M537.8 1594l19.2 12l-11.6 8"/>
<path d="M529 1612.5a5 5 0 0 1 10 0v3.5a5 5 0 0 1-10 0z"/><path d="M526 1609l3 2.5M542 1609l-3 2.5M526 1621l3-3M542 1621l-3-3M525 1615h4M539 1615h4M531 1607.5l1.5 1.5M537 1607.5l-1.5 1.5"/>
<path d="M600.6 1611c1-7 8-11.6 20.8-11.6"/><path d="M620.5 1591.2l10 8.8l-10 8.5"/><circle cx="612.4" cy="1614.8" r="5"/>
<circle cx="957.5" cy="1605.5" r="12.5"/><ellipse cx="957.5" cy="1605.5" rx="5.5" ry="12.5"/><path d="M945 1605.5h25M947 1598.5h21M947 1612.5h21"/>
<path d="M1087.5 1597.5l7 4v9l-7 4l-7-4v-9z" stroke-width="3"/>
<path d="M1776 1605.8l6.7 8.6l1.4-1.6M1784.9 1605.6l6.1 8.8l15.9-18.9M1790 1605.8l8.4-10.3" stroke-width="2"/>
<circle cx="1967.8" cy="1604.1" r="5.6"/><path d="M1959 1619.4c1.5-5.5 5-8 9-8s7.5 2.5 9 8"/><path d="M1967 1598v-6.8h20.2v13.8h-5.5l-3.5 3.5v-3.5"/>
<path d="M2032.8 1614.6h23c-2-2.5-3-5-3-10v-3.5a8.5 8.5 0 0 0-17 0v3.5c0 5-1 7.5-3 10z"/><path d="M2040.5 1617a3.8 3.8 0 0 0 7.5 0" fill="#f3f3f3"/>
</svg>
<div class="a" style="left:2047px;top:1591px;width:12.5px;height:12.5px;border-radius:50%;background:#fff;box-shadow:0 0 0 2px #c5602f"></div>
<div class="a" style="left:0;top:0;width:2098px;height:1632px;border-radius:18px;box-shadow:inset 0 0 0 2px rgba(255,255,255,0.25)"></div>
</div></body></html>
